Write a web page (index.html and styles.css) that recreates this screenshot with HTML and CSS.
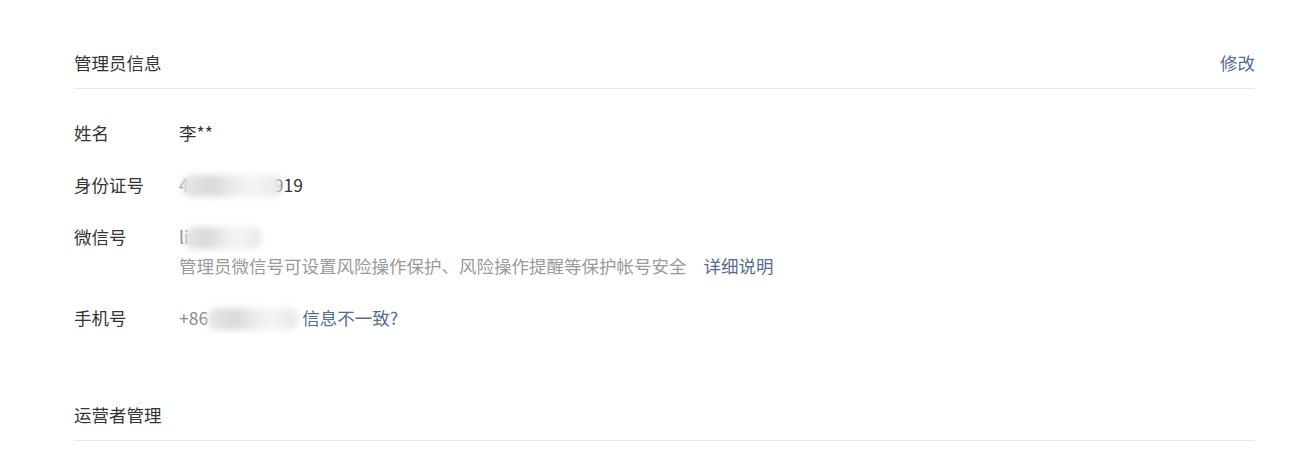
FILE: index.html
```html
<!DOCTYPE html>
<html lang="zh-CN">
<head>
  <meta charset="UTF-8">
  <title>管理员信息</title>
  <link rel="stylesheet" href="styles.css">
</head>
<body>
  <div class="page">
    <div class="section">
      <div class="section-head">
        <h2>管理员信息</h2>
        <a class="link" href="#">修改</a>
      </div>

      <div class="info-list">
        <div class="info-row">
          <span class="label">姓名</span>
          <div class="value">李**</div>
        </div>
        <div class="info-row">
          <span class="label">身份证号</span>
          <div class="value">
            <span class="faint">4</span><span class="mask mask-id"></span>919
          </div>
        </div>
        <div class="info-row">
          <span class="label">微信号</span>
          <div class="value">
            <span class="faint">lin</span><span class="mask mask-wx"></span>
            <p class="hint">管理员微信号可设置风险操作保护、风险操作提醒等保护帐号安全<a class="link" href="#">详细说明</a></p>
          </div>
        </div>
        <div class="info-row">
          <span class="label">手机号</span>
          <div class="value">
            <span class="faint">+86</span><span class="mask mask-phone"></span><a class="link" href="#">信息不一致?</a>
          </div>
        </div>
      </div>
    </div>

    <div class="section">
      <div class="section-head">
        <h2>运营者管理</h2>
      </div>
    </div>
  </div>
</body>
</html>
```

FILE: styles.css
```css
body {
  margin: 0;
  background-color: #fff;
  font-family: "Microsoft YaHei", "Noto Sans CJK SC", sans-serif;
  font-size: 17.5px;
  color: #353535;
}

.page {
  width: 1181px;
  margin-left: 74px;
  padding-top: 49px;
}

.section-head {
  display: flex;
  justify-content: space-between;
  align-items: center;
  padding-bottom: 11px;
  border-bottom: 1px solid #e7e7eb;
  line-height: 28px;
}

.section-head h2 {
  margin: 0;
  font-size: 17.5px;
  font-weight: normal;
}

.link {
  color: #576b95;
  text-decoration: none;
}

.info-list {
  display: flex;
  flex-direction: column;
  gap: 24px;
  padding-top: 30px;
  padding-bottom: 69px;
}

.info-row {
  display: flex;
  line-height: 28px;
}

.label {
  width: 105px;
  flex-shrink: 0;
}

.hint {
  margin: 1px 0 0;
  color: #9a9a9a;
}

.hint .link {
  margin-left: 17px;
}

.faint {
  color: #8a8a8a;
}

/* blurred stand-in for the hidden digits */
.mask {
  display: inline-block;
  height: 22px;
  vertical-align: -5px;
  background: linear-gradient(90deg, #e6e6e6 0%, #dadada 30%, #eeeeee 55%, #f5f5f5 70%, #e8e8e8 100%);
  filter: blur(3px);
  border-radius: 8px;
}

.mask-id {
  width: 100px;
  margin: 0 -8px 0 -7px;
}

.mask-wx {
  width: 76px;
  margin-left: -14px;
}

.mask-phone {
  width: 90px;
  margin-right: 4px;
}
```
